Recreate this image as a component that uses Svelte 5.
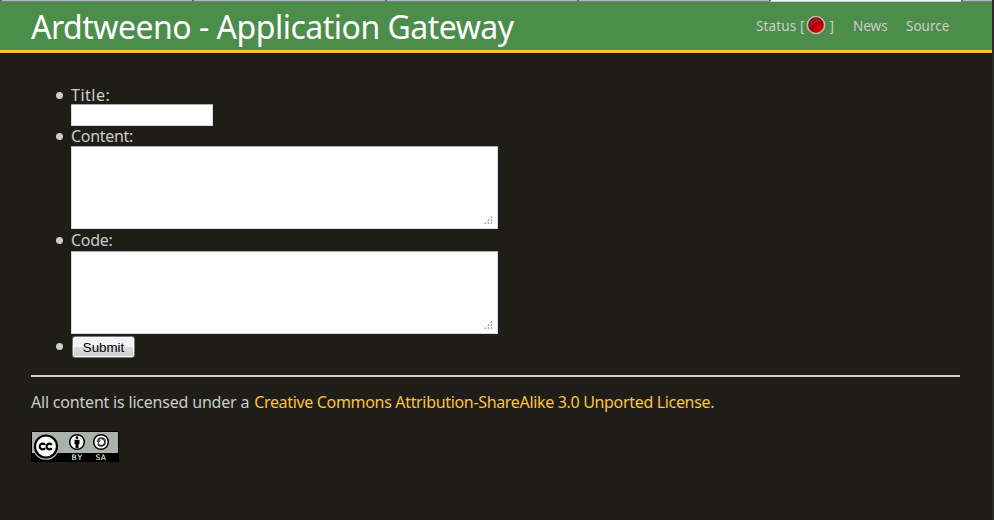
<script>
  const areas = ['Content:', 'Code:'];
  const grip = [[7, 0], [4, 3], [7, 3], [1, 6], [4, 6], [7, 6]];
</script>

<div class="page">
  <div class="tabs"><i></i><i></i><i></i><i></i><i class="active"></i><i></i></div>
  <header>
    <h1>Ardtweeno - Application Gateway</h1>
    <nav>
      <span class="status"><span>Status [</span>
        <svg width="20" height="20" viewBox="0 0 20 20">
          <defs>
            <radialGradient id="led" cx="65%" cy="75%" r="70%">
              <stop offset="0" stop-color="#e80808" />
              <stop offset=".45" stop-color="#b80000" />
              <stop offset="1" stop-color="#6e0000" />
            </radialGradient>
          </defs>
          <circle cx="10" cy="10" r="8.600" fill="url(#led)" stroke="#c4c0b8" stroke-width="1.500" />
          <path d="M3 10C3 5.500 6 3 10 3c3 0 5 1.500 6 3.500C11 6.500 7 8 4 13Z" fill="#c66" opacity=".3" />
        </svg>
        <span>]</span></span>
      <span class="news">News</span>
      <span class="source">Source</span>
    </nav>
  </header>
  <main>
    <ul>
      <li><label class="title" for="title">Title:</label><input id="title" type="text" /></li>
      {#each areas as name}
        <li class="area">
          <label for={name}>{name}</label>
          <div class="box">
            <textarea id={name}></textarea>
            <svg class="grip" width="9" height="8" viewBox="0 0 9 8" shape-rendering="crispEdges">
              {#each grip as [x, y]}
                <rect {x} {y} width="1" height="2" fill="#aaa" /><rect x={x - 1} y={y + 1} width="1" height="1" fill="#ccc" />
              {/each}
            </svg>
          </div>
        </li>
      {/each}
      <li class="send"><button type="button">Submit</button></li>
    </ul>
    <footer>
      <p><span class="pre">All content is licensed under a</span><span class="license">Creative Commons Attribution-ShareAlike 3.0 Unported License</span>.</p>
      <svg class="cc" width="88" height="31" viewBox="0 0 88 31">
        <rect width="88" height="31" rx="1.500" fill="#000" />
        <rect x="1" y="1" width="86" height="21" fill="#aab2ab" />
        <circle cx="15" cy="15.500" r="13.300" fill="#aab2ab" />
        <circle cx="15" cy="15.500" r="11" fill="#fff" stroke="#000" stroke-width="2.200" />
        <path d="M14 13.800A2.900 2.900 0 1 0 14 17.200M20.800 13.800A2.900 2.900 0 1 0 20.800 17.200" fill="none" stroke="#000" stroke-width="2.200" />
        <circle cx="46" cy="11" r="7.300" fill="#fff" stroke="#000" stroke-width="1.500" />
        <circle cx="46" cy="6.700" r="1.400" />
        <path d="M43.500 8.800h5v4.500h-1V17h-3v-3.700h-1Z" />
        <circle cx="70" cy="11" r="7.300" fill="#fff" stroke="#000" stroke-width="1.500" />
        <path d="M67 9.500C68 6 74 6.500 74 11s-6 5-7 1.500" fill="none" stroke="#333" stroke-width="1.800" />
        <path d="M65.300 9.500h4.700L67.500 12.300Z" fill="#333" />
        <text x="40.500" y="29" textLength="10.500">BY</text><text x="64.500" y="29" textLength="10.500">SA</text>
      </svg>
    </footer>
  </main>
</div>

<style>
  :global(body) { background: #1e1d18; overflow: hidden; }
  .page { box-sizing: border-box; width: 994px; height: 520px; border-right: 2px solid #2b2b29; background: #1e1d18; color: #ccc; font: 16px/20px "Noto Sans", sans-serif; overflow: hidden; }
  .tabs { display: flex; height: 2px; background: #9fafb5; width: 992px; }
  .tabs i { box-sizing: border-box; flex: 0 0 192.300px; border-left: 2px solid #586a68; border-bottom: 1px solid #71877b; background: #abb8c8; }
  .tabs i:last-child { flex: 1 1 0; }
  .tabs .active { background: #eef6fb; border-bottom-color: #c4d8d0; }
  header { box-sizing: border-box; display: flex; height: 51px; padding: 0 43px 0 31px; background: #4c8d4c; border-bottom: 3px solid #fdc33c; justify-content: space-between; }
  h1 { margin: 2px 0 0; color: #fff; font-weight: 400; font-size: 32px; line-height: 46px; letter-spacing: -.5px; white-space: nowrap; }
  nav { display: flex; font-size: 13.500px; line-height: 20px; padding-top: 14px; white-space: nowrap; }
  .status { display: flex; width: 97px; }
  .status svg { margin: -1px 3px 0 2px; }
  .status span:first-child { letter-spacing: .12px; }
  .news { width: 53px; }
  .source { width: 43px; }
  main { padding: 33px 32px 0 31px; }
  ul { margin: 0; padding: 0 0 0 40px; list-style: none; }
  li { position: relative; height: 41px; }
  li::before { content: ""; position: absolute; left: -15px; top: 6px; width: 7px; height: 7px; border-radius: 50%; background: #ccc; }
  label { display: block; height: 18px; line-height: 19px; letter-spacing: -.3px; }
  .title { letter-spacing: .5px; }
  input, textarea { display: block; box-sizing: border-box; margin: 0; padding: 2px; border: 1px solid #d8dae5; border-top-color: #abadb3; border-radius: 1px; background: #fff; }
  input { width: 142px; height: 22px; }
  .area { height: 105px; }
  .area:nth-child(2) { height: 104px; }
  .area label { height: 19px; }
  .area:nth-child(3) label { height: 20px; }
  .box { position: relative; width: 427px; }
  textarea { width: 427px; height: 83px; resize: none; }
  .grip { position: absolute; right: 5px; bottom: 5px; }
  .send { height: 33px; }
  .send::before { top: 7px; }
  button { display: block; margin-left: 1px; width: 63px; height: 22px; padding: 0; border: 1px solid #777; border-radius: 3px; box-shadow: inset 0 0 0 1px #fbfbfb; background: linear-gradient(#f2f2f2 0 48%, #dadada 52%, #cfcfcf); color: #000; font: 13.333px "Liberation Sans", sans-serif; }
  footer { margin-top: 6px; border-top: 2px solid #ccc; padding-top: 15px; }
  p { margin: 0; white-space: nowrap; }
  .pre { letter-spacing: -.2px; margin-right: 5px; }
  .license { color: #fdc33c; letter-spacing: -.33px; }
  .cc { display: block; margin-top: 19px; }
  .cc text { fill: #fff; font: 7.500px "DejaVu Sans", sans-serif; }
</style>
